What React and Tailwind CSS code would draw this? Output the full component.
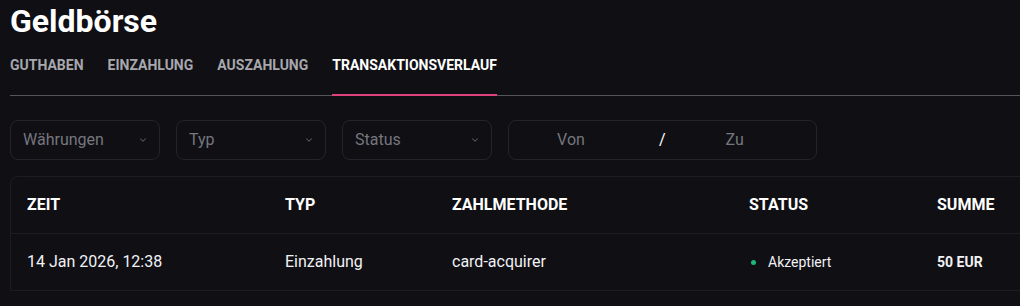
import React from 'react';
import { ChevronDown } from 'lucide-react';

const tabs = ['Guthaben', 'Einzahlung', 'Auszahlung', 'Transaktionsverlauf'];

const Select = ({ label }) => (
  <div className="w-[150px] h-10 rounded-lg border border-[#24242c] flex items-center justify-between pl-3 pr-[11px]">
    <span className="text-[16px] text-[#76767e]">{label}</span>
    <ChevronDown className="w-2.5 h-2.5 text-[#5a5a62]" strokeWidth={2.5} />
  </div>
);

export default function App() {
  return (
    <div className="w-[1020px] h-[306px] overflow-hidden bg-[#0f0f14] pl-[10px] text-white" style={{ fontFamily: 'Roboto, "Liberation Sans", sans-serif' }}>
      <h1 className="text-[32px] font-bold leading-none pt-[5px]">Geldbörse</h1>

      <div className="mt-[18px] flex gap-6 border-b border-[#55555c]">
        {tabs.map((t, i) => (
          <div
            key={t}
            className={`pb-[18px] text-[14px] font-bold uppercase -mb-px border-b-2 ${
              i === 3 ? 'text-white border-[#e0427f]' : 'text-[#a7a7ad] border-transparent'
            }`}
          >
            {t}
          </div>
        ))}
      </div>

      <div className="mt-[24px] flex gap-4">
        <Select label="Währungen" />
        <Select label="Typ" />
        <Select label="Status" />
        <div className="w-[309px] h-10 rounded-lg border border-[#24242c] flex items-center pl-[15px] text-[16px]">
          <span className="w-[94px] text-center text-[#76767e]">Von</span>
          <span className="ml-[41px] text-white">/</span>
          <span className="ml-[22px] w-[94px] text-center text-[#76767e]">Zu</span>
        </div>
      </div>

      <div className="mt-4 w-[1040px] rounded-tl-lg border-l border-t border-[#1c1c24] bg-[#0f0f14]">
        <div className="grid grid-cols-[258px_167px_297px_188px_1fr] h-[57px] items-center pl-4 border-b border-[#1c1c24] text-[16px] font-bold">
          <div>ZEIT</div>
          <div>TYP</div>
          <div>ZAHLMETHODE</div>
          <div>STATUS</div>
          <div>SUMME</div>
        </div>
        <div className="grid grid-cols-[258px_167px_297px_188px_1fr] h-[57px] items-center pl-4 border-b border-[#1c1c24] text-[16px] text-[#f2f2f4]">
          <div>14 Jan 2026, 12:38</div>
          <div>Einzahlung</div>
          <div>card-acquirer</div>
          <div className="flex items-center gap-[12px] text-[14px] pl-[2px]">
            <span className="w-[5px] h-[5px] rounded-full bg-[#1fb878]" />
            Akzeptiert
          </div>
          <div className="text-[14px] font-bold">50 EUR</div>
        </div>
      </div>
    </div>
  );
}
